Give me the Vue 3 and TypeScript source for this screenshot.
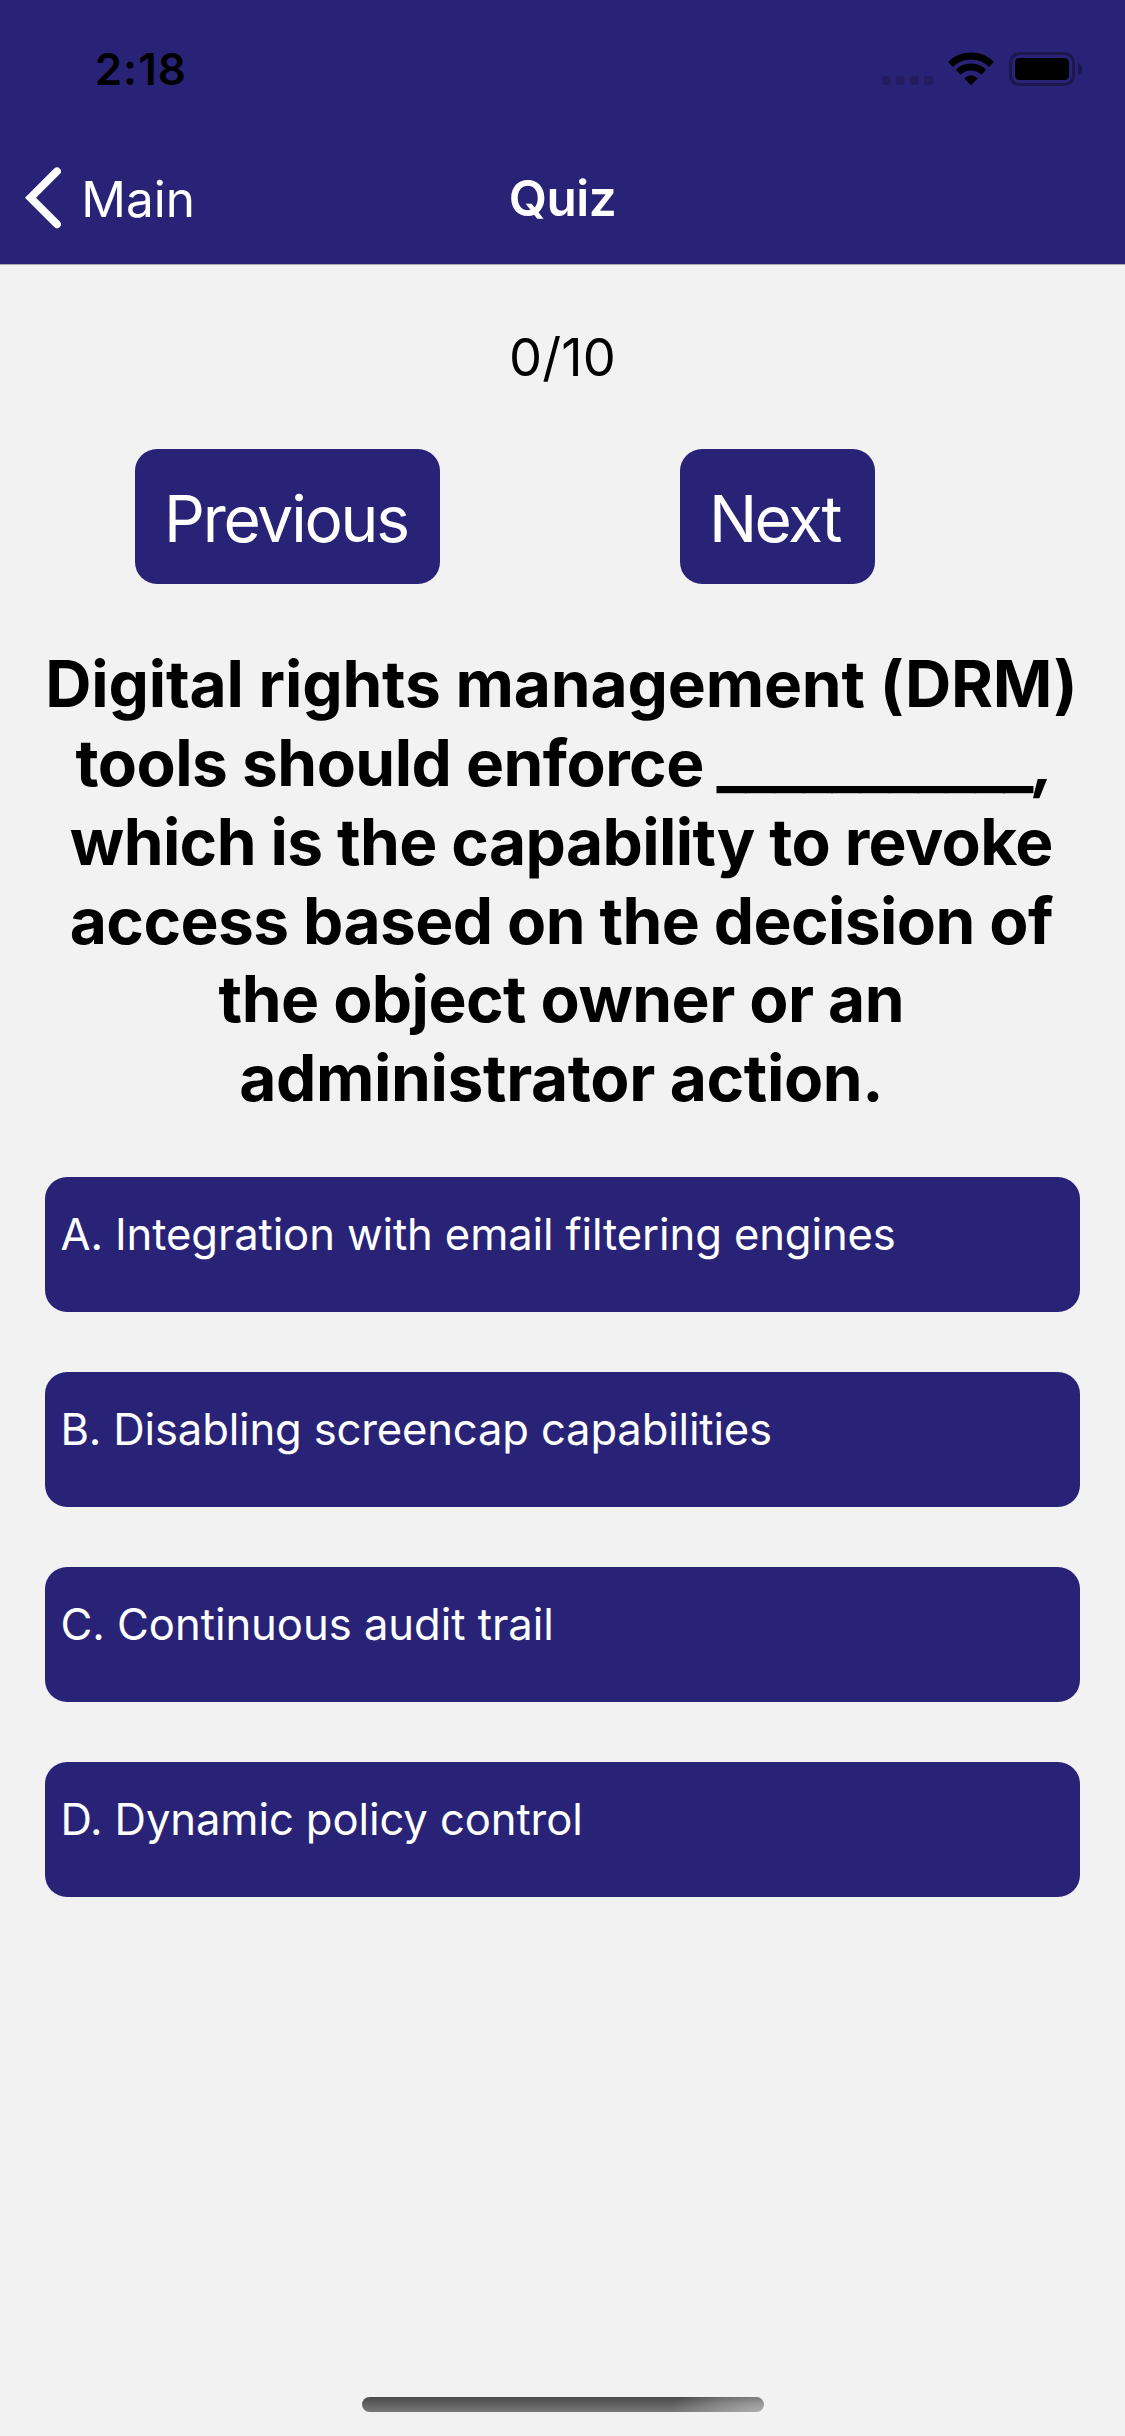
<script setup lang="ts">
interface Line {
  text: string
  spacing: number
  blank?: string
  tail?: string
}

const question: Line[] = [
  { text: 'Digital rights management (DRM)', spacing: -0.17 },
  { text: 'tools should enforce ', spacing: -0.53, blank: '___________', tail: ',' },
  { text: 'which is the capability to revoke', spacing: -0.6 },
  { text: 'access based on the decision of', spacing: -0.6 },
  { text: 'the object owner or an', spacing: -0.55 },
  { text: 'administrator action.', spacing: -0.35 },
]

const answers: Line[] = [
  { text: 'A. Integration with email filtering engines', spacing: -0.12 },
  { text: 'B. Disabling screencap capabilities', spacing: -0.17 },
  { text: 'C. Continuous audit trail', spacing: -0.04 },
  { text: 'D. Dynamic policy control', spacing: -0.1 },
]
</script>

<template>
  <div class="screen">
    <header class="header">
      <div class="status">
        <span class="clock">2:18</span>
        <div class="indicators">
          <div class="signal"><i v-for="n in 4" :key="n"></i></div>
          <svg class="wifi" width="46" height="34" viewBox="0 0 46 34">
            <g fill="none" stroke="#000" stroke-width="7">
              <path d="M2.5 12.4A29.2 29.2 0 0 1 43.5 12.4" />
              <path d="M10.2 20.2A18.1 18.1 0 0 1 35.8 20.2" />
            </g>
            <path d="M23 33.2L16.3 26.4Q19.2 23.2 23 23.2T29.7 26.4Z" fill="#000" />
          </svg>
          <svg class="battery" width="73" height="34" viewBox="0 0 73 34">
            <rect x="1.5" y="1.5" width="63" height="31" rx="9" fill="none" stroke="#1c184e" stroke-width="3" />
            <rect x="6" y="6" width="54" height="22" rx="4.5" fill="#000" />
            <path d="M69 10.5Q73 12.5 73 17T69 23.5Z" fill="#1c184e" />
          </svg>
        </div>
      </div>
      <nav class="nav">
        <button class="back" type="button">
          <svg width="36" height="62" viewBox="0 0 36 62">
            <path d="M32 4.3L5.5 30.8L32 57.3" fill="none" stroke="#fff" stroke-width="7.8" stroke-linecap="round" />
          </svg>
          <span>Main</span>
        </button>
        <h1 class="title">Quiz</h1>
      </nav>
    </header>

    <main class="content">
      <p class="score">0/10</p>

      <div class="pager">
        <button class="step previous" type="button">Previous</button>
        <button class="step next" type="button">Next</button>
      </div>

      <h2 class="question">
        <span v-for="line in question" :key="line.text" class="line" :class="{ gapped: line.blank }" :style="{ letterSpacing: line.spacing + 'px' }">{{ line.text }}<span v-if="line.blank" class="blank">{{ line.blank }}</span><span v-if="line.tail" class="tail">{{ line.tail }}</span></span>
      </h2>

      <div class="answers">
        <button v-for="a in answers" :key="a.text" class="answer" type="button" :style="{ letterSpacing: a.spacing + 'px' }">{{ a.text }}</button>
      </div>
    </main>

    <div class="home"></div>
  </div>
</template>

<style>
body {
  margin: 0;
  background: #f2f2f2;
}
</style>

<style scoped>
.screen {
  width: 1125px;
  height: 2436px;
  display: flex;
  flex-direction: column;
  background: #f2f2f2;
  color: #000;
  font-family: Inter, 'Liberation Sans', sans-serif;
  overflow: hidden;
}

button {
  appearance: none;
  border: 0;
  margin: 0;
  padding: 0;
  background: none;
  color: #fff;
  font: inherit;
  text-align: left;
  white-space: nowrap;
}

.header {
  box-sizing: border-box;
  height: 265px;
  background: #292377;
  border-bottom: 1px solid #a7a7aa;
}

.status {
  box-sizing: border-box;
  height: 132px;
  padding: 0 43px 0 94.7px;
  display: flex;
  justify-content: space-between;
}

.clock {
  margin-top: 39px;
  height: 60px;
  font-size: 44px;
  line-height: 60px;
  font-weight: 600;
  letter-spacing: 1px;
}

.indicators {
  margin-top: 52px;
  height: 34px;
  display: flex;
  align-items: flex-start;
}

.signal {
  display: flex;
  gap: 5px;
  margin: 24px 15px 0 0;
}

.signal i {
  width: 9px;
  height: 9px;
  border-radius: 3px;
  background: #231d60;
}

.battery {
  margin-left: 15px;
}

.nav {
  height: 132px;
  display: grid;
  grid-template-columns: 1fr auto 1fr;
  align-items: center;
  font-size: 49.5px;
  line-height: 60px;
}

.back {
  display: flex;
  align-items: center;
  gap: 20.3px;
  padding-left: 25px;
}

.back span {
  padding-top: 2px;
}

.title {
  margin: 0;
  font-size: 49.5px;
  font-weight: 600;
  letter-spacing: -0.5px;
  color: #fff;
}

.content {
  flex: 1;
}

.score {
  margin: 60px 0 0;
  text-align: center;
  font-size: 52.4px;
  line-height: 64px;
  letter-spacing: 0.15px;
}

.pager {
  margin-top: 60px;
  padding-left: 135px;
  display: flex;
  gap: 240px;
}

.step {
  box-sizing: border-box;
  height: 135px;
  padding: 4px 0 0 29px;
  border-radius: 22px;
  background: #292377;
  font-size: 64px;
  line-height: 131px;
}

.previous {
  width: 305px;
  letter-spacing: -2.2px;
}

.next {
  width: 195px;
  letter-spacing: -2.6px;
}

.question {
  margin: 61.3px 0 0;
  padding-right: 2.4px;
  font-size: 64px;
  line-height: 78.8px;
  font-weight: 700;
  text-align: center;
}

.line {
  display: block;
  white-space: pre;
}

.gapped {
  padding-left: 7px;
}

.blank {
  margin: 0 1.5px 0 -2px;
  letter-spacing: -1.81px;
}

.tail {
  display: inline-block;
  transform: skewX(-6deg);
}

.answers {
  margin: 58.9px 45px 0;
  display: flex;
  flex-direction: column;
  gap: 60px;
}

.answer {
  box-sizing: border-box;
  height: 135px;
  padding: 0 0 19px 15.5px;
  border-radius: 22px;
  background: #292377;
  font-size: 43.6px;
  line-height: 116px;
}

.home {
  align-self: center;
  width: 402px;
  height: 15px;
  margin-bottom: 24px;
  border-radius: 8px;
  background:
    radial-gradient(ellipse 95px 30px at 100% 100%, rgba(180, 180, 180, 0.9), rgba(180, 180, 180, 0) 100%),
    linear-gradient(#4a4a4a, #787878);
}
</style>
